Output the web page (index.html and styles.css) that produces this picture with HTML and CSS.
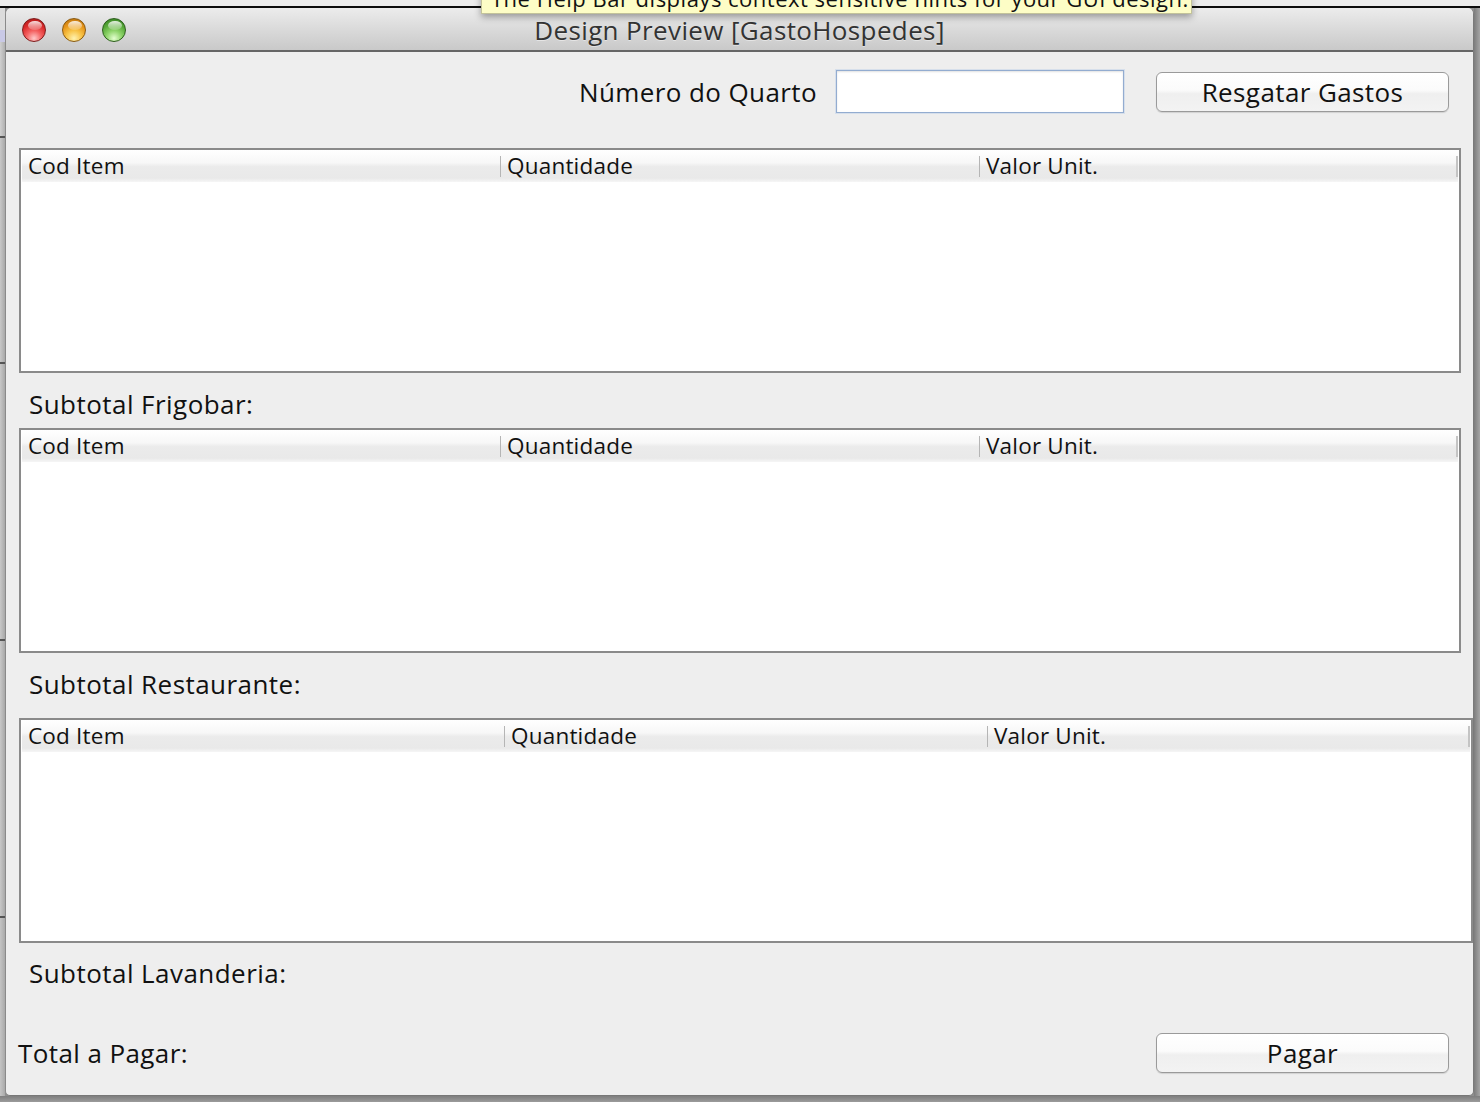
FILE: index.html
```html
<!DOCTYPE html>
<html lang="pt">
<head>
<meta charset="utf-8">
<title>Design Preview [GastoHospedes]</title>
<link rel="stylesheet" href="styles.css">
</head>
<body>
<div class="desktop">
  <div class="topline"></div>
  <div class="middle">
    <div class="leftstrip">
      <div class="ls ls-blue"></div>
      <div class="ls ls-gap1"></div>
      <div class="ls ls-line"></div>
      <div class="ls ls-gap2"></div>
      <div class="ls ls-line"></div>
      <div class="ls ls-gap3"></div>
      <div class="ls ls-line"></div>
      <div class="ls ls-gap3"></div>
      <div class="ls ls-line"></div>
    </div>
    <div class="window">
      <div class="titlebar">
        <div class="lights">
          <span class="light red"></span>
          <span class="light yellow"></span>
          <span class="light green"></span>
        </div>
        <div class="title">Design Preview [GastoHospedes]</div>
        <div></div>
      </div>
      <div class="content">
        <div class="searchrow">
          <label class="biglabel" for="quarto">Número do Quarto</label>
          <input id="quarto" class="field" type="text">
          <button class="btn" type="button">Resgatar Gastos</button>
        </div>

        <div class="table t1">
          <div class="thead">
            <div class="th first">Cod Item</div>
            <div class="th">Quantidade</div>
            <div class="th last">Valor Unit.</div>
          </div>
        </div>
        <div class="subtotal s1">Subtotal Frigobar:</div>

        <div class="table t2">
          <div class="thead">
            <div class="th first">Cod Item</div>
            <div class="th">Quantidade</div>
            <div class="th last">Valor Unit.</div>
          </div>
        </div>
        <div class="subtotal s2">Subtotal Restaurante:</div>

        <div class="table t3">
          <div class="thead">
            <div class="th first">Cod Item</div>
            <div class="th">Quantidade</div>
            <div class="th last">Valor Unit.</div>
          </div>
        </div>
        <div class="subtotal s3">Subtotal Lavanderia:</div>

        <div class="totalrow">
          <div class="totallabel">Total a Pagar:</div>
          <button class="btn" type="button">Pagar</button>
        </div>
      </div>
    </div>
    <div class="rightstrip"></div>
  </div>
  <div class="bottomstrip"></div>
  <div class="tooltip">The Help Bar displays context sensitive hints for your GUI design.</div>
</div>
</body>
</html>
```

FILE: styles.css
```css
* { box-sizing: border-box; }

html, body {
  margin: 0;
  padding: 0;
  background: #8f8f8f;
}

.desktop {
  position: relative;
  width: 1480px;
  height: 1102px;
  overflow: hidden;
  display: flex;
  flex-direction: column;
  font-family: "Open Sans", "DejaVu Sans", sans-serif;
  color: #111;
}

.topline {
  height: 8px;
  flex: none;
  background: #ececec;
  border-bottom: 2px solid #0c0c0c;
}

.middle {
  display: flex;
  height: 1088px;
  flex: none;
}

.leftstrip {
  width: 5px;
  flex: none;
  display: flex;
  flex-direction: column;
  background: linear-gradient(90deg, #c4c4c4, #a9a9a9);
}
.ls-blue { height: 34px; background: linear-gradient(#dcdcdc 0, #dcdcdc 22px, #c9c9e6 22px, #c9c9e6 34px); }
.ls-gap1 { height: 94px; background: linear-gradient(90deg, #d0d0d0, #b0b0b0); }
.ls-line { height: 2px; background: #555; }
.ls-gap2 { height: 224px; background: linear-gradient(90deg, #c8c8c8, #a8a8a8); }
.ls-gap3 { height: 275px; background: linear-gradient(90deg, #c8c8c8, #a8a8a8); }

.rightstrip {
  flex: 1;
  background: linear-gradient(90deg, #7d7d7d, #a5a5a5);
}

.bottomstrip {
  flex: 1;
  background: linear-gradient(#7e7e7e, #9b9b9b);
}

.window {
  width: 1469px;
  flex: none;
  display: flex;
  flex-direction: column;
  background: #eeeeee;
  border-left: 1px solid #8a8a8a;
  border-right: 1px solid #7a7a7a;
  border-bottom: 1px solid #777;
  border-radius: 6px 6px 5px 5px;
  overflow: hidden;
}

.titlebar {
  height: 44px;
  flex: none;
  display: grid;
  grid-template-columns: 1fr auto 1fr;
  align-items: center;
  background: linear-gradient(#ececec 0%, #dcdcdc 45%, #c9c9c9 100%);
  border-bottom: 2px solid #666;
}

.lights {
  display: flex;
  gap: 16px;
  padding-left: 16px;
  padding-top: 2px;
}

.light {
  position: relative;
  width: 24px;
  height: 24px;
  border-radius: 50%;
  display: block;
}
.light::after {
  content: "";
  position: absolute;
  left: 5px;
  top: 2px;
  width: 14px;
  height: 9px;
  border-radius: 50%;
  background: linear-gradient(rgba(255,255,255,0.85), rgba(255,255,255,0.15));
}
.red {
  background: radial-gradient(circle at 50% 88%, #ffc9c9 0%, #f46060 35%, #d92828 65%, #a31616 100%);
  border: 1px solid #7e1c1c;
}
.yellow {
  background: radial-gradient(circle at 50% 88%, #fff2b0 0%, #f8c448 35%, #e69418 65%, #b06a0c 100%);
  border: 1px solid #8a5a10;
}
.green {
  background: radial-gradient(circle at 50% 88%, #e4ffd0 0%, #8ed46a 35%, #56a838 65%, #2f7a1e 100%);
  border: 1px solid #2c5e1c;
}

.title {
  font-size: 26px;
  line-height: 32px;
  letter-spacing: 0.37px;
  color: #333;
  padding-top: 2px;
  text-shadow: 0 1px 0 rgba(255,255,255,0.45);
  white-space: nowrap;
}

.content {
  flex: 1;
  padding-left: 13px;
  display: flex;
  flex-direction: column;
}

.searchrow {
  margin-top: 18px;
  height: 43px;
  display: flex;
  align-items: center;
  justify-content: flex-end;
  padding-right: 24px;
}

.biglabel {
  font-size: 26px;
  line-height: 32px;
  letter-spacing: 0.4px;
  margin-right: 19px;
  color: #111;
}

.field {
  width: 288px;
  height: 43px;
  margin: 0 32px 0 0;
  padding: 0 6px;
  border: 1px solid #93acd0;
  background: #fff;
  box-shadow: inset 0 1px 2px rgba(0,0,0,0.12), 0 0 0 1px rgba(170,195,230,0.35);
  font-family: inherit;
  font-size: 22px;
  outline: none;
}

.btn {
  width: 293px;
  height: 40px;
  padding: 0;
  border: 1px solid #9a9a9a;
  border-radius: 6px;
  background: linear-gradient(#ffffff 0%, #fbfbfb 45%, #efefef 55%, #f3f3f3 100%);
  box-shadow: 0 1px 1px rgba(0,0,0,0.12);
  font-family: inherit;
  font-size: 26px;
  line-height: 32px;
  letter-spacing: 0.4px;
  color: #111;
}

.table {
  height: 225px;
  flex: none;
  background: #fff;
  border: 2px solid #8a8a8a;
  padding: 0 1px;
}
.t1, .t2 { width: 1442px; }
.t1 { margin-top: 35px; }
.t2 { margin-top: 8px; }
.t3 { width: 1454px; margin-top: 18px; }

.thead {
  height: 32px;
  display: flex;
  background: linear-gradient(#ffffff 0%, #f7f7f7 40%, #ebebeb 52%, #e9e9e9 88%, #f6f6f6 100%);
}

.th {
  flex: 1;
  font-size: 22.5px;
  line-height: 32px;
  letter-spacing: 0.2px;
  padding-left: 7px;
  color: #111;
  white-space: nowrap;
  background: linear-gradient(#b5b5b5, #b5b5b5) left 6px / 1px 21px no-repeat;
}
.th.first {
  padding-left: 6px;
  background: none;
}
.th.last {
  background:
    linear-gradient(#b5b5b5, #b5b5b5) left 6px / 1px 21px no-repeat,
    linear-gradient(#c4c4c4, #c4c4c4) right 6px / 2px 21px no-repeat;
}

.subtotal {
  font-size: 26px;
  line-height: 32px;
  letter-spacing: 0.45px;
  margin-left: 10px;
  color: #111;
}
.s1 { margin-top: 15px; }
.s2 { margin-top: 15px; }
.s3 { margin-top: 14px; }

.totalrow {
  margin-top: 44px;
  height: 40px;
  display: flex;
  align-items: center;
  justify-content: space-between;
  padding-right: 24px;
}

.totallabel {
  font-size: 26px;
  line-height: 32px;
  letter-spacing: 0.4px;
  margin-left: -1px;
  color: #111;
}

.tooltip {
  position: absolute;
  left: 481px;
  top: -22px;
  width: 711px;
  height: 36px;
  padding: 4px 9px;
  background: #fdfdc6;
  border: 1px solid #c2c29a;
  box-shadow: 0 3px 7px rgba(0,0,0,0.35);
  font-size: 22px;
  line-height: 30px;
  letter-spacing: 0.5px;
  color: #111;
  white-space: nowrap;
  overflow: hidden;
}
```
